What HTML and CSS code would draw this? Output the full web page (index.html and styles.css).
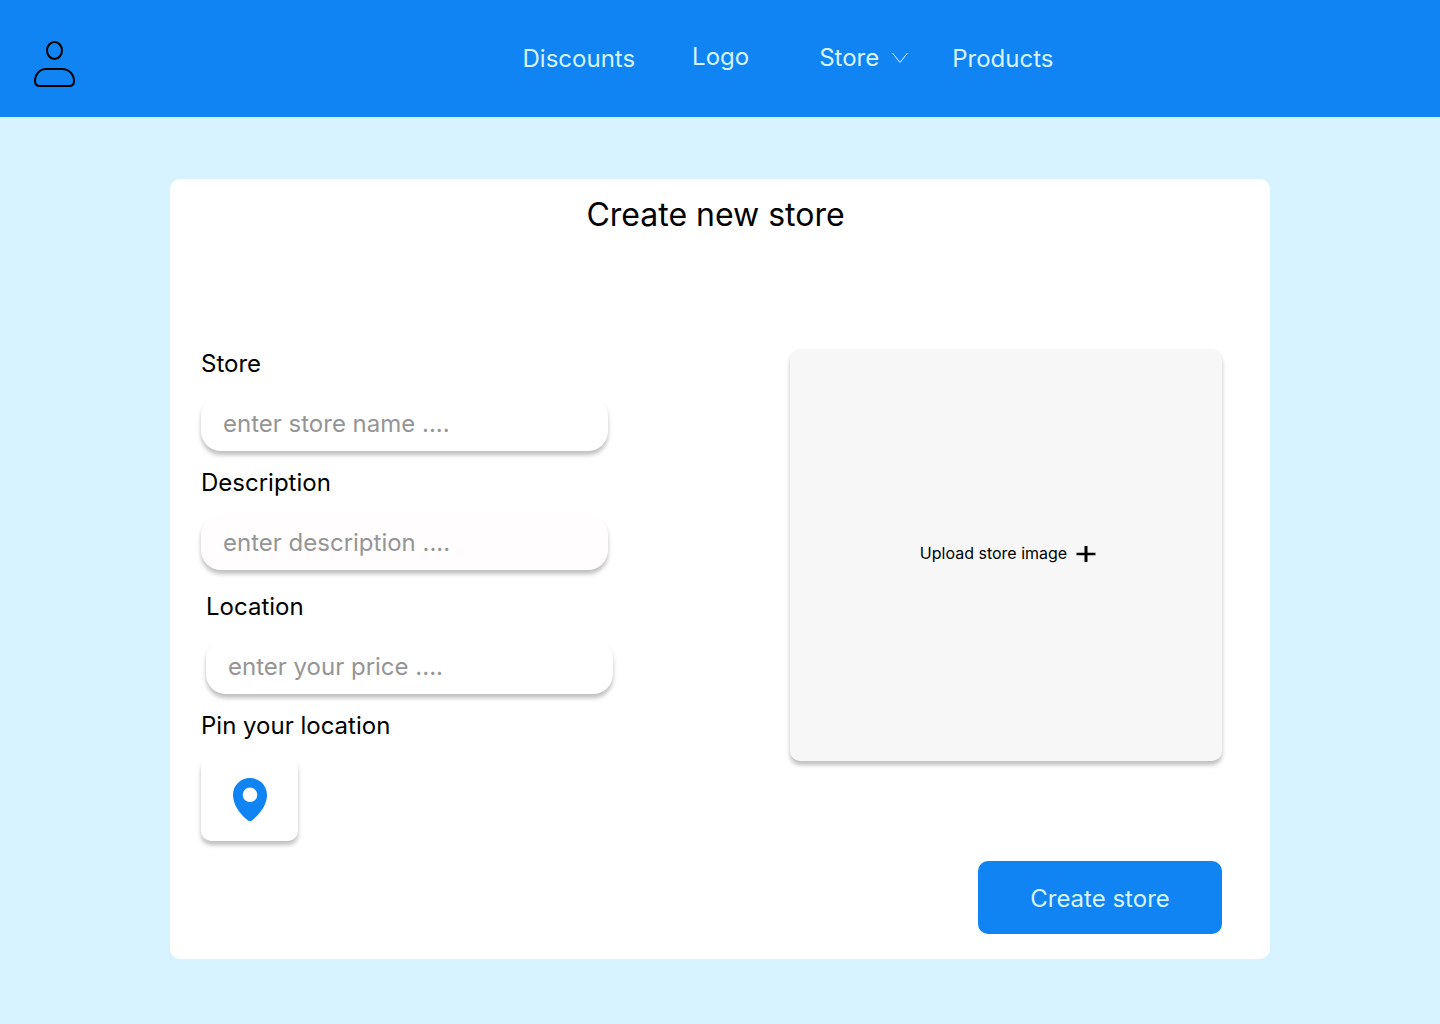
FILE: index.html
```html
<!DOCTYPE html>
<html lang="en">
<head>
<meta charset="utf-8">
<meta name="viewport" content="width=device-width, initial-scale=1">
<title>Create new store</title>
<link rel="stylesheet" href="styles.css">
</head>
<body>
<header class="topbar">
  <a class="account" href="#" aria-label="Account">
    <svg width="42" height="48" viewBox="0 0 42 48" fill="none" stroke="#000" stroke-width="2">
      <ellipse cx="21.500" cy="10.500" rx="7.500" ry="8.500"/>
      <path d="M13 29H29C36 29 41 34.500 41 41C41 44.500 39 46 36 46H7C4 46 2 44.500 2 41C2 34.500 6.500 29 13 29Z"/>
    </svg>
  </a>
  <nav class="nav">
    <a class="nav-link" href="#">Discounts</a>
    <a class="nav-link nav-logo" href="#">Logo</a>
    <a class="nav-link nav-store" href="#">Store
      <svg width="18" height="12" viewBox="0 0 18 12" fill="none" stroke="currentColor" stroke-width="1"><path d="M1.500 1L9 10.500L16.500 1"/></svg>
    </a>
    <a class="nav-link" href="#">Products</a>
  </nav>
</header>
<main class="page">
  <form class="card">
    <h1 class="title">Create new store</h1>
    <div class="columns">
      <div class="fields">
        <div class="field">
          <label class="label" for="store">Store</label>
          <input class="input" id="store" type="text" placeholder="enter store name ....">
        </div>
        <div class="field">
          <label class="label" for="description">Description</label>
          <input class="input input-tinted" id="description" type="text" placeholder="enter description ....">
        </div>
        <div class="field field-location">
          <label class="label" for="location">Location</label>
          <input class="input" id="location" type="text" placeholder="enter your price ....">
        </div>
        <div class="field">
          <label class="label" for="pin">Pin your location</label>
          <button class="pin" id="pin" type="button">
            <svg width="34" height="44" viewBox="0 0 34 44"><path fill="#0f84f2" fill-rule="evenodd" d="M17 0C7.500 0 0 7.500 0 16.800C0 27 7 36 15 42.500Q17 44 19 42.500C27 36 34 27 34 16.800C34 7.500 26.500 0 17 0ZM17 9.500A7.300 7.300 0 1 1 17 24.100A7.300 7.300 0 1 1 17 9.500Z"/></svg>
          </button>
        </div>
      </div>
      <div class="side">
        <button class="upload" type="button">Upload store image
          <svg width="20" height="18" viewBox="0 0 20 18" fill="none" stroke="#000"><path stroke-width="2.500" d="M0.500 10H19.500"/><path stroke-width="3" d="M10 2V18"/></svg>
        </button>
        <button class="submit" type="submit">Create store</button>
      </div>
    </div>
  </form>
</main>
</body>
</html>
```
FILE: styles.css
```css
* {
  box-sizing: border-box;
}

body {
  margin: 0;
  min-height: 100vh;
  background: #d7f3ff;
  color: #000;
  font-family: Inter, "Liberation Sans", sans-serif;
  font-size: 24px;
  line-height: 29px;
}

button,
input {
  border: 0;
  font: inherit;
  color: inherit;
}

svg {
  display: block;
  flex: none;
}

.topbar {
  display: flex;
  align-items: center;
  min-height: 117px;
  padding: 10px 33px 0;
  background: #0f84f2;
}

.nav {
  flex: 1;
  display: flex;
  justify-content: center;
  padding: 0 0 10px 94px;
}

.nav-link {
  color: #d7f3ff;
  text-decoration: none;
}

.nav-logo {
  margin: 0 70px 0 57px;
}

.nav-store {
  display: flex;
  align-items: center;
  gap: 12px;
  margin-right: 43px;
}

.nav-logo,
.nav-store {
  margin-top: -2px;
}

.page {
  padding: 62px 24px;
}

.card {
  max-width: 1100px;
  margin: 0 auto;
  padding: 16px 48px 25px 31px;
  border-radius: 10px;
  background: #fff;
}

.title {
  margin: 0 0 115px;
  padding-left: 8px;
  font-size: 32px;
  font-weight: 400;
  line-height: 39px;
  text-align: center;
}

.columns {
  display: flex;
  flex-wrap: wrap;
  justify-content: space-between;
  gap: 32px;
}

.fields {
  flex: 0 1 412px;
  display: flex;
  flex-direction: column;
  gap: 17px;
}

.field {
  display: flex;
  flex-direction: column;
  align-items: flex-start;
  gap: 18px;
}

.field-location {
  padding: 5px 0 0 5px;
}

.input {
  width: 100%;
  max-width: 407px;
  height: 55px;
  padding: 0 22px;
  border-radius: 20px;
  background: #fff;
  box-shadow: 0 4px 4px rgba(0, 0, 0, 0.25);
}

.input-tinted {
  background: #fffdfe;
}

.input::placeholder {
  color: #959595;
  opacity: 1;
}

.pin {
  display: grid;
  place-items: center;
  width: 97px;
  height: 83px;
  padding: 0;
  border-radius: 10px;
  background: #fff;
  box-shadow: 0 4px 4px rgba(0, 0, 0, 0.25);
}

.side {
  flex: 0 1 432px;
  display: flex;
  flex-direction: column;
  align-items: flex-end;
  gap: 100px;
}

.upload {
  display: flex;
  align-items: center;
  justify-content: center;
  gap: 9px;
  width: 100%;
  min-height: 412px;
  padding: 0 0 4px 4px;
  border-radius: 10px;
  background: #f7f7f7;
  box-shadow: 0 4px 4px rgba(0, 0, 0, 0.25);
  font-size: 16px;
  line-height: 19px;
}

.submit {
  width: 244px;
  height: 73px;
  padding: 2px 0 0;
  border-radius: 10px;
  background: #0f84f2;
  color: #d7f3ff;
}
```
